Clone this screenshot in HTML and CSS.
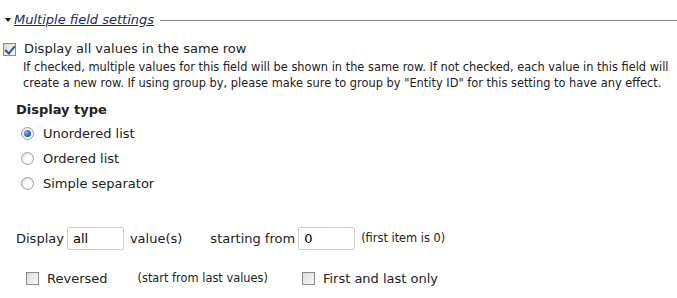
FILE: index.html
```html
<!DOCTYPE html>
<html>
<head>
  <meta charset="UTF-8">
  <title>Multiple field settings</title>
  <link rel="stylesheet" href="styles.css">
</head>
<body>
  <fieldset class="settings">
    <legend><span class="arrow"></span><a href="#">Multiple field settings</a></legend>

    <div class="form-item same-row">
      <label><input type="checkbox" checked> Display all values in the same row</label>
      <div class="description">If checked, multiple values for this field will be shown in the same row. If not checked, each value in this field will create a new row. If using group by, please make sure to group by "Entity ID" for this setting to have any effect.</div>
    </div>

    <div class="form-item display-type">
      <h4>Display type</h4>
      <label class="radio"><input type="radio" name="type" checked> Unordered list</label>
      <label class="radio"><input type="radio" name="type"> Ordered list</label>
      <label class="radio"><input type="radio" name="type"> Simple separator</label>
    </div>

    <div class="form-item inline-row">
      <span>Display</span>
      <input type="text" class="text" value="all">
      <span class="after">value(s)</span>
      <span class="start">starting from</span>
      <input type="text" class="text" value="0">
      <span class="small">(first item is 0)</span>
    </div>

    <div class="form-item inline-row checks">
      <label class="reversed"><input type="checkbox"> Reversed</label>
      <span class="small hint">(start from last values)</span>
      <label><input type="checkbox"> First and last only</label>
    </div>
  </fieldset>
</body>
</html>
```
FILE: styles.css
```css
* {
  box-sizing: border-box;
}

body {
  margin: 0;
  font-family: "DejaVu Sans", Verdana, sans-serif;
  font-size: 13px;
  color: #222;
  background: #fff;
}

.settings {
  margin: 12px 0 0 0;
  padding: 0;
  border: 0;
  border-top: 1px solid #888;
  min-width: 0;
}

.settings legend {
  margin: 0;
  padding: 0 6px 0 5px;
  line-height: 16px;
}

.settings legend a {
  color: #1b2a5a;
  font-style: italic;
  text-decoration: underline;
}

.arrow {
  display: inline-block;
  width: 0;
  height: 0;
  margin: 0 3px 2px 0;
  border-left: 3.5px solid transparent;
  border-right: 3.5px solid transparent;
  border-top: 4px solid #111;
  vertical-align: middle;
}

.form-item label {
  display: inline-flex;
  align-items: center;
  gap: 8px;
}

input[type="checkbox"],
input[type="radio"] {
  appearance: none;
  margin: 0;
  width: 13px;
  height: 13px;
  position: relative;
  background: linear-gradient(135deg, #dcdcd6, #fafaf8);
  border: 1px solid #8a8a8a;
}

input[type="radio"] {
  border-radius: 50%;
  border-color: #a0a0a0;
  background: radial-gradient(circle at 60% 60%, #fff 30%, #d4d4d4 100%);
}

input[type="radio"]:checked::after {
  content: "";
  position: absolute;
  left: 2px;
  top: 2px;
  width: 7px;
  height: 7px;
  border-radius: 50%;
  background: radial-gradient(circle at 35% 35%, #7fb6e6, #1a5a9e 70%);
}

input[type="checkbox"]:checked::after {
  content: "";
  position: absolute;
  left: 3px;
  top: 0px;
  width: 4px;
  height: 8px;
  border: solid #2a4fb8;
  border-width: 0 2px 2px 0;
  transform: rotate(40deg);
}

.same-row {
  margin-top: 13px;
  padding-left: 3px;
}

.same-row label {
  line-height: 16px;
}

.description {
  margin-left: 20px;
  font-size: 11.4px;
  line-height: 16px;
}

.display-type {
  margin-top: 11px;
  padding-left: 16px;
}

.display-type h4 {
  margin: 0 0 3px 0;
  font-size: 13px;
  line-height: 16px;
}

.display-type .radio {
  display: flex;
  margin-left: 5px;
  line-height: 25px;
  gap: 9px;
}

.inline-row {
  display: flex;
  align-items: center;
  padding-left: 16px;
}

.inline-row .text {
  width: 57px;
  height: 23px;
  margin: 0 6px 0 3px;
  padding: 1px 5px;
  font: inherit;
  color: #000;
  border: 1px solid #ccc;
  border-radius: 2px;
}

.inline-row .start {
  margin-left: 28px;
}

.small {
  font-size: 11.4px;
}

.display-type + .inline-row {
  margin-top: 31px;
}

.checks {
  margin-top: 21px;
  padding-left: 26px;
}

.checks .hint {
  margin-left: 30px;
  margin-right: 34px;
}
```
